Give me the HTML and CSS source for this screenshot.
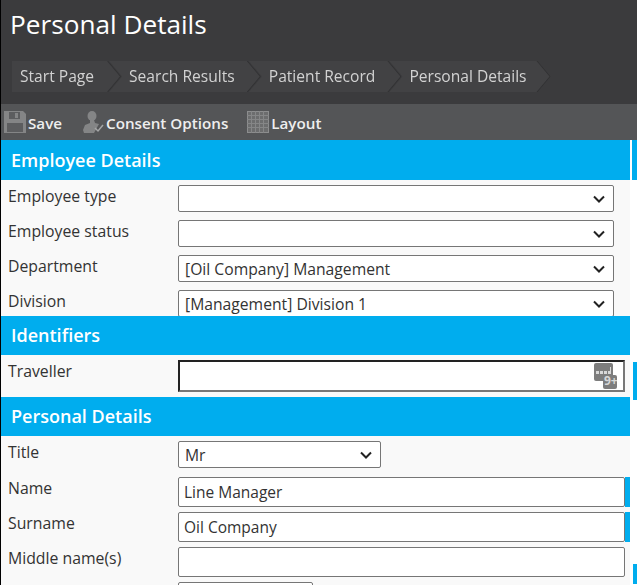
FILE: index.html
```html
<!DOCTYPE html>
<html lang="en">
<head>
<meta charset="utf-8">
<title>Personal Details</title>
<link rel="stylesheet" href="styles.css">
</head>
<body>
<div class="page">
  <header class="top">
    <h1 class="page-title">Personal Details</h1>
    <nav class="crumbs">
      <a class="crumb crumb-first">Start Page</a>
      <a class="crumb">Search Results</a>
      <a class="crumb">Patient Record</a>
      <a class="crumb crumb-last">Personal Details</a>
    </nav>
  </header>
  <div class="toolbar">
    <span class="tool tool-save">
      <svg class="icon" width="24" height="24" viewBox="0 0 24 24"><path fill="#848586" d="M1 1h19l3 3v19H1z"/><path fill="#5c5d5f" d="M6 2h11v7H6zM4 13h16v9H4z"/><path fill="#848586" d="M12 3h3v5h-3z"/></svg>
      Save
    </span>
    <span class="tool tool-consent">
      <svg class="icon" width="24" height="24" viewBox="0 0 24 24"><ellipse cx="11" cy="6" rx="4.500" ry="5" fill="#848586"/><path fill="#848586" d="M9 10h4l1 3 4 1-5 9H3l-1-3 2-5 5-2z"/><path fill="none" stroke="#a5a6a7" stroke-width="1.500" d="M14 18l3 3 5-6"/></svg>
      Consent Options
    </span>
    <span class="tool tool-layout">
      <svg class="icon" width="24" height="24" viewBox="0 0 24 24"><rect x="1.500" y="1.500" width="21" height="21" fill="#6c6d6e" stroke="#8c8d8e"/><path stroke="#858687" stroke-width="1" fill="none" d="M5.500 1v22M9.500 1v22M13.500 1v22M17.500 1v22M1 5.500h22M1 9.500h22M1 13.500h22M1 17.500h22"/></svg>
      Layout
    </span>
  </div>

  <section class="group group-employee">
    <h2 class="group-head">Employee Details</h2>
    <div class="row"><label class="label">Employee type</label><div class="select select-wide"><span></span><svg class="chev" width="12" height="8" viewBox="0 0 12 8"><path d="M1 1.500l5 5 5-5" fill="none" stroke="#222" stroke-width="2"/></svg></div></div>
    <div class="row"><label class="label">Employee status</label><div class="select select-wide"><span></span><svg class="chev" width="12" height="8" viewBox="0 0 12 8"><path d="M1 1.500l5 5 5-5" fill="none" stroke="#222" stroke-width="2"/></svg></div></div>
    <div class="row"><label class="label">Department</label><div class="select select-wide"><span>[Oil Company] Management</span><svg class="chev" width="12" height="8" viewBox="0 0 12 8"><path d="M1 1.500l5 5 5-5" fill="none" stroke="#222" stroke-width="2"/></svg></div></div>
    <div class="row"><label class="label">Division</label><div class="select select-wide"><span>[Management] Division 1</span><svg class="chev" width="12" height="8" viewBox="0 0 12 8"><path d="M1 1.500l5 5 5-5" fill="none" stroke="#222" stroke-width="2"/></svg></div></div>
  </section>

  <section class="group group-identifiers">
    <h2 class="group-head">Identifiers</h2>
    <div class="row row-traveller">
      <label class="label">Traveller</label>
      <div class="traveller">
        <svg class="keypad" width="23" height="26" viewBox="0 0 23 26"><rect x="0" y="0" width="19" height="18" rx="2" fill="#7d7d7d"/><rect x="9" y="12" width="14" height="14" rx="2" fill="#7d7d7d"/><path fill="#d8d8d8" d="M2 8h3v3H2zM6 8h3v3H6zM10 8h3v3h-3zM14 8h2v3h-2zM16 4h1v7h-1z"/><text x="10" y="22" class="keypad-text">9+</text></svg>
      </div>
    </div>
  </section>

  <section class="group group-personal">
    <h2 class="group-head">Personal Details</h2>
    <div class="row row-title"><label class="label">Title</label><div class="select select-short"><span>Mr</span><svg class="chev" width="12" height="8" viewBox="0 0 12 8"><path d="M1 1.500l5 5 5-5" fill="none" stroke="#222" stroke-width="2"/></svg></div></div>
    <div class="row row-text"><label class="label">Name</label><div class="input">Line Manager</div></div>
    <div class="row row-text"><label class="label">Surname</label><div class="input">Oil Company</div></div>
    <div class="row row-text"><label class="label">Middle name(s)</label><div class="input"></div></div>
    <div class="row row-text"><label class="label"></label><div class="input input-short"></div></div>
  </section>

  <i class="mark mark-employee"></i>
  <i class="mark mark-traveller"></i>
  <i class="mark mark-name"></i>
  <i class="mark mark-surname"></i>
  <i class="mark mark-bottom"></i>
</div>
</body>
</html>
```
FILE: styles.css
```css
* { box-sizing: border-box; }
html, body { margin: 0; padding: 0; background: #fff; }
body { overflow: hidden; }
.page {
  position: relative;
  width: 637px;
  height: 585px;
  overflow: hidden;
  font-family: "Open Sans", "Noto Sans", sans-serif;
  color: #333;
  border-left: 1px solid #000;
}
.top { height: 104px; background: #3b3b3d; padding: 6px 0 0 9px; }
.page-title { margin: 0; font-size: 26.200px; line-height: 37px; font-weight: 400; color: #fff; }
.crumbs { display: flex; margin: 18px 0 0 2px; height: 31px; filter: drop-shadow(1px 0 0 #313133); }
.crumb {
  height: 31px;
  line-height: 30px;
  font-size: 15.600px;
  color: #d2d2d2;
  background: #424244;
  padding: 0 25px 0 20px;
  clip-path: polygon(0 0, calc(100% - 13px) 0, 100% 50%, calc(100% - 13px) 100%, 0 100%, 13px 50%);
  margin-right: -11px;
}
.crumb-first { padding-left: 8px; padding-right: 26px; clip-path: polygon(0 0, calc(100% - 13px) 0, 100% 50%, calc(100% - 13px) 100%, 0 100%); }
.crumb-last { padding-right: 23px; }
.toolbar { height: 36px; background: #545557; display: flex; align-items: center; padding: 2px 0 0 2px; }
.tool { display: flex; align-items: center; font-size: 15.200px; font-weight: 600; color: #eee; }
.icon { margin: -2px 1px 0 0; }
.tool-save { margin-right: 19px; }
.tool-consent { margin-right: 18px; }
.group { width: 629px; background: #f9f9f9; overflow: hidden; }
.group-head { margin: 0; background: #00adee; color: #fff; font-size: 18px; font-weight: 600; line-height: 40px; height: 40px; padding-left: 10px; }
.group-employee { height: 176px; }
.group-employee .group-head { margin-bottom: 5px; }
.group-identifiers { height: 81px; }
.group-identifiers .group-head { height: 39px; line-height: 38px; margin-bottom: 5px; }
.group-personal { height: 188px; }
.group-personal .group-head { height: 39px; line-height: 38px; margin-bottom: 5px; }
.row { display: flex; align-items: flex-start; height: 35px; }
.label { width: 177px; padding-left: 7px; font-size: 15.800px; line-height: 23px; color: #333; flex: none; }
.select {
  height: 27px;
  background: #fff;
  border: 1px solid #767676;
  border-radius: 2px;
  display: flex;
  align-items: center;
  justify-content: space-between;
  padding: 0 8px 0 6px;
  font-size: 15.700px;
  color: #333;
}
.select-wide { width: 436px; }
.select-short { width: 203px; }
.chev { flex: none; }
.row-traveller { height: 37px; }
.traveller {
  width: 447px;
  height: 32px;
  background: #fff;
  border: 2px solid #777;
  border-top-color: #222;
  border-left-color: #222;
  display: flex;
  justify-content: flex-end;
  padding: 1px 6px 0 0;
}
.keypad-text { font-size: 12px; font-weight: 700; fill: #d8d8d8; }
.row-title { height: 36px; }
.row-text { height: 35px; }
.input {
  width: 447px;
  height: 30px;
  background: #fff;
  border: 1px solid #767676;
  border-radius: 2px;
  padding: 0 5px;
  font-size: 15.500px;
  line-height: 28px;
  color: #333;
}
.input-short { width: 135px; }
.mark { position: absolute; background: #00adee; }
.mark-employee { left: 631px; top: 140px; width: 5px; height: 40px; }
.mark-traveller { left: 632px; top: 362px; width: 4px; height: 38px; }
.mark-name { left: 624px; top: 477px; width: 5px; height: 30px; }
.mark-surname { left: 624px; top: 512px; width: 5px; height: 30px; }
.mark-bottom { left: 632px; top: 564px; width: 4px; height: 20px; }
```
